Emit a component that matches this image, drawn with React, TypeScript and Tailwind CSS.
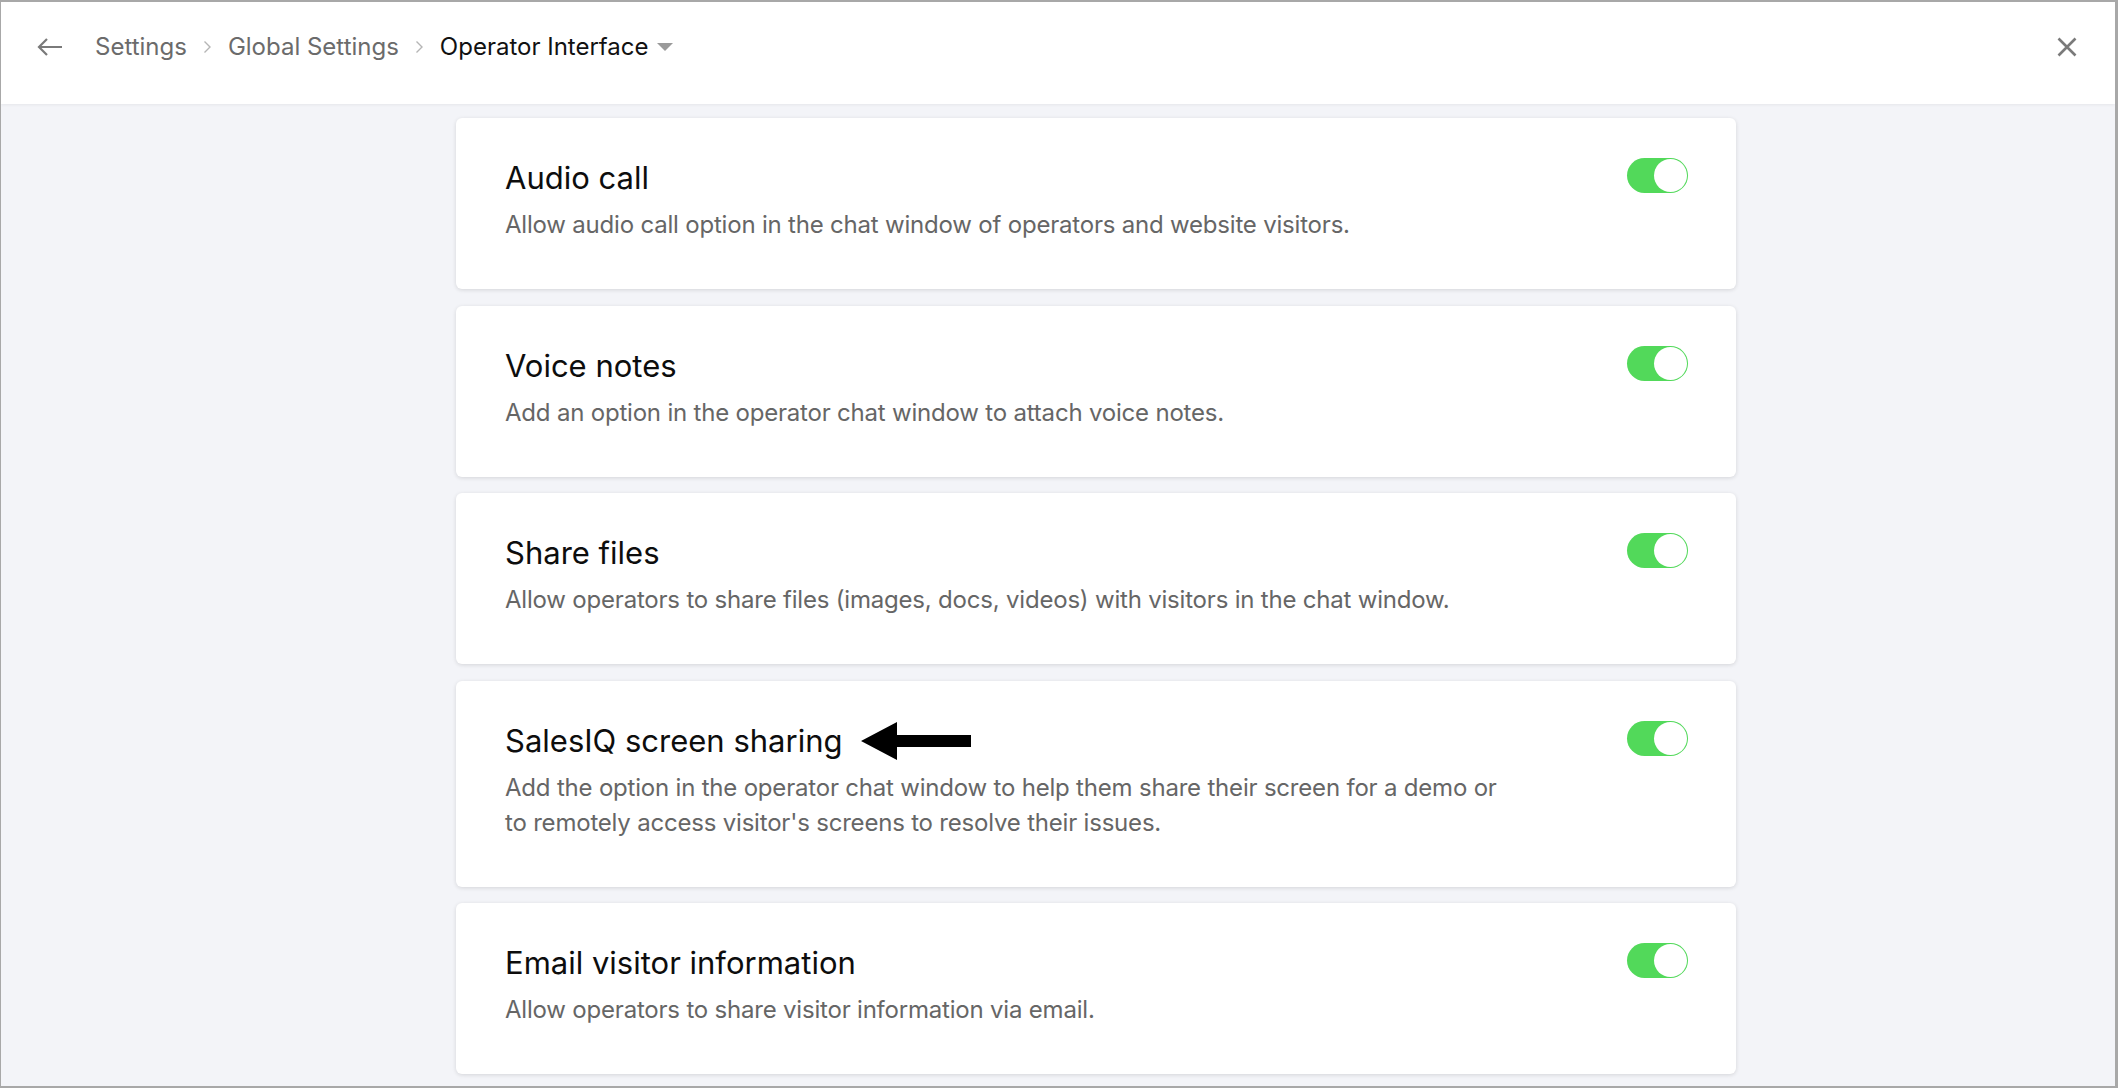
import React from 'react';

type Setting = {
  title: string;
  lines: string[];
  pointer?: boolean;
};

const settings: Setting[] = [
  {
    title: 'Audio call',
    lines: ['Allow audio call option in the chat window of operators and website visitors.'],
  },
  {
    title: 'Voice notes',
    lines: ['Add an option in the operator chat window to attach voice notes.'],
  },
  {
    title: 'Share files',
    lines: ['Allow operators to share files (images, docs, videos) with visitors in the chat window.'],
  },
  {
    title: 'SalesIQ screen sharing',
    lines: [
      'Add the option in the operator chat window to help them share their screen for a demo or',
      "to remotely access visitor's screens to resolve their issues.",
    ],
    pointer: true,
  },
  {
    title: 'Email visitor information',
    lines: ['Allow operators to share visitor information via email.'],
  },
];

function Toggle() {
  return (
    <div className="relative h-[35px] w-[61px] shrink-0 rounded-full bg-[#52d95a]">
      <div className="absolute right-[1px] top-[1px] h-[33px] w-[33px] rounded-full bg-white" />
    </div>
  );
}

function Chevron() {
  return (
    <svg width="9" height="14" viewBox="0 0 9 14" className="shrink-0">
      <path d="M1.5 1.5 L7 7 L1.5 12.5" fill="none" stroke="#b5b5b5" strokeWidth="1.4" />
    </svg>
  );
}

function PointerArrow() {
  return (
    <svg width="111" height="38" viewBox="0 0 111 38" className="shrink-0">
      <path d="M0 19 L36 0 L36 13 L110 13 L110 25 L36 25 L36 38 Z" fill="#000" />
    </svg>
  );
}

function SettingCard({ item }: { item: Setting }) {
  return (
    <div className="flex items-start justify-between rounded-[6px] bg-white pb-[47px] pl-[49px] pr-[48px] pt-[40px] shadow-[0_1px_4px_rgba(0,0,0,0.13)]">
      <div className="flex flex-col gap-[9px]">
        <div className="flex h-[40px] items-center gap-[18px]">
          <h2 className="text-[31px] leading-[40px] text-[#0d0d0d]">{item.title}</h2>
          {item.pointer && <PointerArrow />}
        </div>
        <p className="text-[24px] leading-[35px] tracking-[-0.2px] text-[#666]">
          {item.lines.map((line, i) => (
            <React.Fragment key={i}>
              {i > 0 && <br />}
              {line}
            </React.Fragment>
          ))}
        </p>
      </div>
      <Toggle />
    </div>
  );
}

export default function App() {
  return (
    <div
      className="flex h-[1088px] w-[2118px] flex-col overflow-hidden border-b-2 border-l border-r-[3px] border-t-2 border-[#a8a8a8] bg-[#f3f4f8]"
      style={{ fontFamily: 'Inter, "Noto Sans", sans-serif' }}
    >
      {/* Header */}
      <div className="flex h-[102px] shrink-0 items-center bg-white pb-[12px] pl-[36px] pr-[20px] shadow-[0_1px_3px_rgba(0,0,0,0.06)]">
        <svg width="26" height="20" viewBox="0 0 26 20" className="shrink-0">
          <path d="M25 10 H2 M10 2 L2 10 L10 18" fill="none" stroke="#7a7a7a" strokeWidth="2.2" />
        </svg>
        <div className="ml-[32px] flex items-center gap-[16px] text-[24px]">
          <span className="text-[#6b6b6b]">Settings</span>
          <Chevron />
          <span className="text-[#6b6b6b]">Global Settings</span>
          <Chevron />
          <span className="text-[#111]">Operator Interface</span>
          <svg width="16" height="9" viewBox="0 0 16 9" className="-ml-[8px] shrink-0">
            <path d="M0 0 H16 L8 8 Z" fill="#9a9a9a" />
          </svg>
        </div>
        <div className="flex-1" />
        <svg width="20" height="20" viewBox="0 0 20 20" className="mr-[18px] shrink-0">
          <path d="M1.5 1.5 L18.5 18.5 M18.5 1.5 L1.5 18.5" fill="none" stroke="#7a7a7a" strokeWidth="2.6" />
        </svg>
      </div>

      {/* Settings list */}
      <div className="ml-[455px] flex w-[1280px] flex-col gap-[16.5px] pt-[14px]">
        {settings.map((s) => (
          <SettingCard key={s.title} item={s} />
        ))}
      </div>
    </div>
  );
}
